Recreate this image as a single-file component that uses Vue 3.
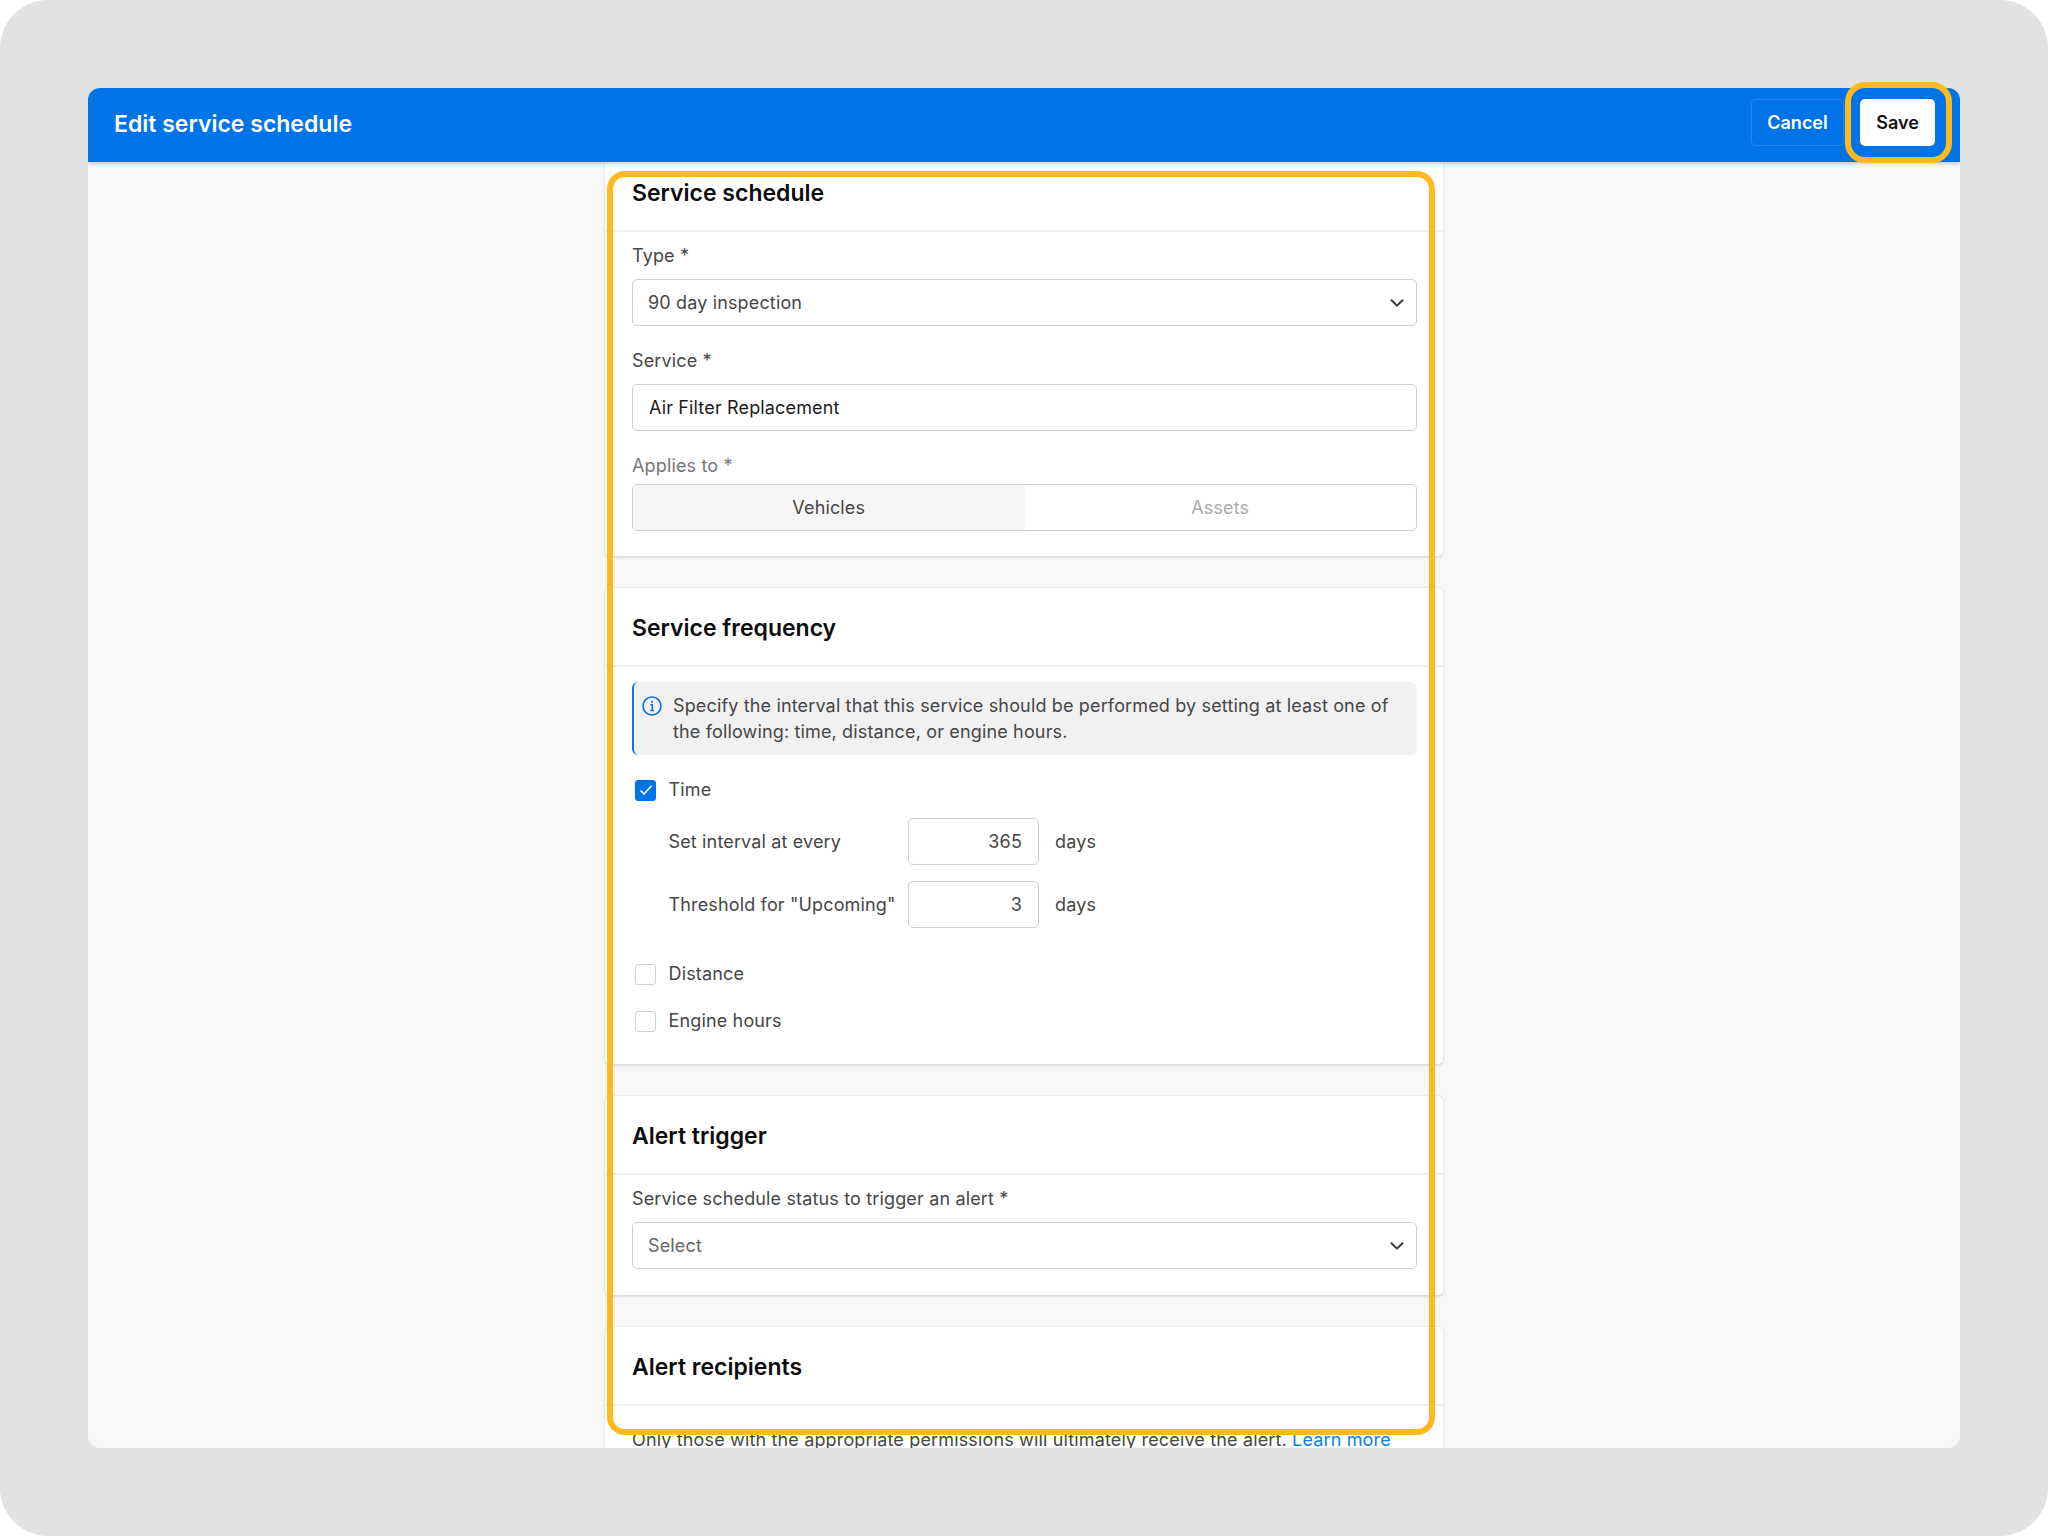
<template>
  <div class="frame">
    <div class="window">
      <header class="topbar">
        <h1>Edit service schedule</h1>
        <div class="topbar-actions">
          <button class="btn btn-ghost">Cancel</button>
          <button class="btn btn-white">Save</button>
        </div>
      </header>

      <div class="scroll">
        <div class="stack">
          <section class="card card-first">
            <h2 class="card-head">Service schedule</h2>
            <div class="card-body">
              <label class="field-label">Type *</label>
              <div class="select">
                <span>90 day inspection</span>
                <svg width="14" height="8" viewBox="0 0 14 8" fill="none"><path d="M1.500 1.200 7 6.600l5.500-5.400" stroke="#3a3a3a" stroke-width="2" stroke-linecap="round" stroke-linejoin="round"/></svg>
              </div>
              <label class="field-label">Service *</label>
              <input class="text-input" type="text" value="Air Filter Replacement" />
              <label class="field-label muted">Applies to *</label>
              <div class="segmented">
                <div class="segment active">Vehicles</div>
                <div class="segment">Assets</div>
              </div>
            </div>
          </section>

          <section class="card">
            <h2 class="card-head">Service frequency</h2>
            <div class="card-body freq">
              <div class="notice">
                <svg class="notice-icon" width="20" height="20" viewBox="0 0 20 20" fill="none">
                  <circle cx="10" cy="10" r="9" stroke="#0f6fde" stroke-width="1.600"/>
                  <circle cx="10" cy="5.800" r="1.100" fill="#0f6fde"/>
                  <path d="M8.300 8.800H10.300V14.400M8.300 14.400H12" stroke="#0f6fde" stroke-width="1.500"/>
                </svg>
                <p>Specify the interval that this service should be performed by setting at least one of the following: time, distance, or engine hours.</p>
              </div>

              <div class="check-row">
                <span class="check checked">
                  <svg width="14" height="12" viewBox="0 0 14 12" fill="none"><path d="M1.500 6.500 5 10 12.500 1.800" stroke="#fff" stroke-width="1.600"/></svg>
                </span>
                Time
              </div>
              <div class="interval-rows">
                <div v-for="row in intervals" :key="row.label" class="interval-row">
                  <span class="interval-label">{{ row.label }}</span>
                  <input class="number-input" type="text" :value="row.value" />
                  <span>days</span>
                </div>
              </div>
              <div class="check-row spaced"><span class="check"></span>Distance</div>
              <div class="check-row"><span class="check"></span>Engine hours</div>
            </div>
          </section>

          <section class="card">
            <h2 class="card-head">Alert trigger</h2>
            <div class="card-body">
              <label class="field-label">Service schedule status to trigger an alert *</label>
              <div class="select placeholder">
                <span>Select</span>
                <svg width="14" height="8" viewBox="0 0 14 8" fill="none"><path d="M1.500 1.200 7 6.600l5.500-5.400" stroke="#3a3a3a" stroke-width="2" stroke-linecap="round" stroke-linejoin="round"/></svg>
              </div>
            </div>
          </section>

          <section class="card">
            <h2 class="card-head">Alert recipients</h2>
            <div class="card-body recipients">
              <p>Only those with the appropriate permissions will ultimately receive the alert. <a>Learn more</a></p>
            </div>
          </section>
        </div>
      </div>
    </div>

    <div class="highlight highlight-form"></div>
    <div class="highlight highlight-save"></div>
  </div>
</template>

<script setup>
const intervals = [
  { label: 'Set interval at every', value: '365' },
  { label: 'Threshold for "Upcoming"', value: '3' }
]
</script>

<style>
html, body {
  background: #fff;
}
</style>

<style scoped>
.frame {
  position: relative;
  box-sizing: border-box;
  width: 2048px;
  height: 1536px;
  padding: 88px;
  background: #e2e2e2;
  border-radius: 48px;
  font-family: Inter, "Liberation Sans", sans-serif;
  font-size: 18px;
  line-height: 26px;
  letter-spacing: 0.15px;
  color: #464646;
  overflow: hidden;
}
.window {
  display: flex;
  flex-direction: column;
  height: 100%;
  background: #f7f7f7;
  border-radius: 12px;
  overflow: hidden;
}
.topbar {
  display: flex;
  align-items: center;
  justify-content: space-between;
  flex: none;
  box-sizing: border-box;
  height: 74px;
  padding: 0 25px 5px 26px;
  background: #0073e6;
  box-shadow: 0 1px 4px rgba(0, 0, 0, 0.25);
  position: relative;
  z-index: 1;
}
.topbar h1 {
  margin: 2px 0 0;
  font-size: 23px;
  font-weight: 600;
  letter-spacing: 0;
  color: #fff;
}
.topbar-actions {
  display: flex;
  gap: 16px;
}
.btn {
  height: 47px;
  border-radius: 5px;
  font: 600 18px Inter, sans-serif;
  padding: 0;
}
.btn-ghost {
  width: 93px;
  background: transparent;
  border: 1px solid #2a87ea;
  color: #fff;
}
.btn-white {
  width: 75px;
  background: #fff;
  border: none;
  color: #111;
}
.scroll {
  flex: 1;
  display: flex;
  justify-content: center;
  overflow: hidden;
}
.stack {
  display: flex;
  flex-direction: column;
  flex: none;
  gap: 30px;
  width: 840px;
  height: 100%;
}
.card {
  flex: none;
  box-sizing: border-box;
  background: #fff;
  border: 1px solid #ebebeb;
  border-bottom-color: #dcdcdc;
  border-radius: 6px;
  box-shadow: 0 1px 2px rgba(0, 0, 0, 0.1);
}
.card-first {
  margin-top: -10px;
}
.card-head {
  display: flex;
  align-items: center;
  box-sizing: border-box;
  height: 79px;
  margin: 0;
  padding: 3px 27px 0;
  font-size: 23px;
  font-weight: 600;
  letter-spacing: 0;
  color: #0c0c0c;
  border-bottom: 2px solid #f0f0f0;
}
.card-body {
  padding: 11px 26px 26px 27px;
}
.card-first .card-body {
  padding-bottom: 25px;
}
.field-label {
  display: block;
  margin-bottom: 10px;
}
.field-label.muted {
  color: #777;
  margin-bottom: 5px;
}
.select,
.text-input {
  box-sizing: border-box;
  width: 100%;
  height: 47px;
  margin-bottom: 22px;
  border: 1px solid #cfcfcf;
  border-radius: 5px;
  background: #fff;
}
.select {
  display: flex;
  align-items: center;
  justify-content: space-between;
  padding: 0 12px 0 15px;
}
.card-body > .select:last-child {
  margin-bottom: 0;
}
.select.placeholder {
  color: #666;
}
.text-input {
  display: block;
  padding: 0 16px;
  font: 18px Inter, sans-serif;
  letter-spacing: 0.15px;
  color: #1c1c1c;
  outline: none;
}
.segmented {
  display: flex;
  height: 47px;
  box-sizing: border-box;
  border: 1px solid #cfcfcf;
  border-radius: 5px;
  overflow: hidden;
}
.segment {
  flex: 1;
  display: flex;
  align-items: center;
  justify-content: center;
  color: #aaa;
}
.segment.active {
  background: #f6f6f6;
  color: #464646;
}
.freq {
  padding-top: 15px;
  padding-bottom: 30px;
}
.notice {
  display: flex;
  gap: 11px;
  padding: 11px 16px 10px 8px;
  background: #f1f1f1;
  border-left: 2px solid #0f72e5;
  border-radius: 6px;
}
.notice-icon {
  flex: none;
  margin-top: 3px;
}
.notice p {
  margin: 0;
}
.check-row {
  display: flex;
  align-items: center;
  gap: 12.500px;
  height: 26px;
  margin: 0 0 21px 3px;
}
.notice + .check-row {
  margin-top: 22px;
  margin-bottom: 15px;
}
.check-row.spaced {
  margin-top: 33px;
}
.check-row:last-child {
  margin-bottom: 0;
}
.check {
  flex: none;
  display: flex;
  align-items: center;
  justify-content: center;
  box-sizing: border-box;
  width: 21px;
  height: 21px;
  border: 1px solid #cfcfcf;
  border-radius: 3px;
  background: #fff;
}
.check.checked {
  background: #0073e6;
  border-color: #0073e6;
}
.interval-rows {
  display: flex;
  flex-direction: column;
  gap: 16px;
  margin-left: 36.500px;
}
.interval-row {
  display: flex;
  align-items: center;
  gap: 16px;
}
.interval-label {
  width: 223.500px;
  white-space: nowrap;
}
.number-input {
  box-sizing: border-box;
  width: 131px;
  height: 47px;
  padding: 0 16px;
  border: 1px solid #cfcfcf;
  border-radius: 5px;
  background: #fff;
  font: 18px Inter, sans-serif;
  letter-spacing: 0.15px;
  color: #464646;
  text-align: right;
  outline: none;
}
.recipients {
  padding-top: 21px;
}
.recipients p {
  margin: 0;
}
.recipients a {
  color: #0d80ea;
}
.highlight {
  position: absolute;
  z-index: 2;
  box-sizing: border-box;
  border: 6px solid #fdb91e;
  pointer-events: none;
}
.highlight-form {
  left: 607px;
  top: 171px;
  width: 828px;
  height: 1264px;
  border-radius: 18px;
}
.highlight-save {
  left: 1845px;
  top: 82px;
  width: 107px;
  height: 81px;
  border-radius: 20px;
}
</style>
